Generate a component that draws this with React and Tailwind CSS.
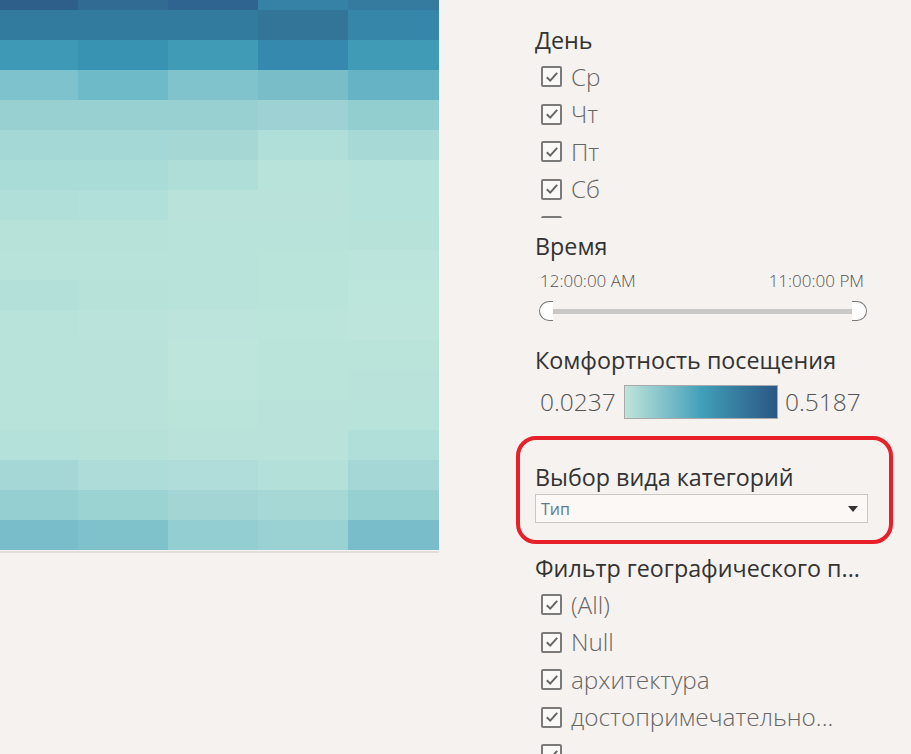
import React from 'react';

const heat = [
  ['#2e5f8a', '#316a93', '#2f6490', '#3681a6', '#357a9f'],
  ['#327b9e', '#337b9e', '#327b9e', '#337599', '#3586a8'],
  ['#3d99b5', '#3892b1', '#3f9bb6', '#3589ae', '#3f9bb6'],
  ['#7dc2cc', '#6fbac9', '#80c3cc', '#78bdc8', '#66b3c6'],
  ['#98d0d2', '#98d0d2', '#98d0d2', '#9dd1d3', '#92cdd0'],
  ['#a3d8d6', '#a3d8d6', '#a5d8d5', '#b0dfda', '#a7d9d6'],
  ['#a9dcd7', '#aadcd7', '#afddd8', '#b8e3da', '#b5e2da'],
  ['#b0ded9', '#b1dfda', '#b8e2da', '#b8e2da', '#b5e2da'],
  ['#b6e2da', '#b6e2da', '#b8e3da', '#b8e3da', '#b6e2da'],
  ['#b7e3da', '#b7e3da', '#b8e3da', '#b9e4da', '#bae4dc'],
  ['#b3e0d9', '#b7e2da', '#b8e3db', '#b9e4da', '#bce5dc'],
  ['#b8e3db', '#b9e3db', '#bde4dc', '#bbe4da', '#bde5dc'],
  ['#b8e3db', '#b9e3da', '#bde5dc', '#bae4da', '#bae4da'],
  ['#b8e3da', '#b9e3da', '#bde5dc', '#bae4da', '#b9e3da'],
  ['#b8e3da', '#b9e3da', '#bae4da', '#b9e3da', '#b8e3da'],
  ['#b4e1da', '#b5e1d9', '#b9e3da', '#b8e2da', '#b0ded8'],
  ['#a4d7d5', '#aedcd9', '#b0ddd9', '#b3e0d9', '#a4d7d5'],
  ['#96cfd1', '#9bd2d2', '#a2d5d4', '#a6d9d6', '#97d0d1'],
  ['#78bdc9', '#7fc2cb', '#93ced2', '#9ad1d2', '#78bdc9'],
];

function Check() {
  return (
    <span className="w-[21px] h-[21px] border-2 border-[#7a7a7a] rounded-[2px] bg-[#fbf9f7] flex items-center justify-center shrink-0">
      <svg width="14" height="12" viewBox="0 0 14 12">
        <path d="M1.8 6.2 L5.2 9.6 L12.2 1.8" fill="none" stroke="#666" strokeWidth="2" />
      </svg>
    </span>
  );
}

function Item({ label }) {
  return (
    <div className="h-[37.5px] flex items-center gap-[9px] pl-[6px]">
      <Check />
      {label && <span className="text-[24.3px] leading-[30px] font-light text-[#666] whitespace-nowrap">{label}</span>}
    </div>
  );
}

function Title({ children }) {
  return <div className="text-[23.3px] leading-[28px] text-[#333] whitespace-nowrap">{children}</div>;
}

export default function App() {
  return (
    <div className="w-[911px] h-[754px] overflow-hidden bg-[#f6f2ef] flex" style={{ fontFamily: '"Open Sans", "Noto Sans", sans-serif' }}>
      {/* heatmap */}
      <div className="w-[439px] shrink-0 self-start border-b-2 border-[#e2dedb]">
        <div className="grid grid-cols-[78px_90px_90px_90px_91px] grid-rows-[10px_repeat(18,30px)] h-[551px]">
          {heat.flatMap((row, r) =>
            row.map((c, i) => <div key={r + '-' + i} style={{ backgroundColor: c }} />)
          )}
        </div>
      </div>

      {/* filters */}
      <div className="ml-[96px] w-[350px] shrink-0 pt-[26px]">
        <Title>День</Title>
        <div className="h-[164px] overflow-hidden pt-[4px]">
          {['Ср', 'Чт', 'Пт', 'Сб'].map((d) => <Item key={d} label={d} />)}
          <Item />
        </div>

        <div className="mt-[14px]"><Title>Время</Title></div>
        <div className="flex justify-between pl-[5px] pr-[7px] mt-[11px] text-[17px] leading-[20px] text-[#555] font-light w-[336px]">
          <span>12:00:00 AM</span>
          <span>11:00:00 PM</span>
        </div>
        <div className="flex items-center pl-[4px] mt-[10px] h-[20px]">
          <div className="w-[14px] h-[20px] border-[1.5px] border-r-0 border-[#777] rounded-l-full bg-white" />
          <div className="w-[299px] h-[5px] bg-[#c8c8c8]" />
          <div className="w-[15px] h-[20px] border-[1.5px] border-l-0 border-[#777] rounded-r-full bg-white" />
        </div>

        <div className="mt-[25px]"><Title>Комфортность посещения</Title></div>
        <div className="flex items-center mt-[11px] h-[34px] pl-[5px]">
          <span className="text-[24.5px] font-light text-[#555] w-[84px]">0.0237</span>
          <div className="w-[154px] h-[34px] border border-[#a9a9a9] bg-gradient-to-r from-[#bfe4da] via-[#41a0ba] to-[#2b5784]" />
          <span className="text-[24.5px] font-light text-[#555] ml-[7px]">0.5187</span>
        </div>

        <div className="-ml-[19px] mt-[17px] w-[377px] h-[108px] border-[4px] border-[#e8202a] rounded-[20px] pl-[15px] pt-[23px]">
          <Title>Выбор вида категорий</Title>
          <div className="mt-[3px] w-[333px] h-[29px] border border-[#c9c6c3] bg-[#fbf8f6] flex items-center justify-between pl-[5px] pr-[9px]">
            <span className="text-[16px] text-[#5d7893]">Тип</span>
            <svg width="10" height="6" viewBox="0 0 10 6"><path d="M0 0 L10 0 L5 6 Z" fill="#333" /></svg>
          </div>
        </div>

        <div className="mt-[10px]"><Title>Фильтр географического п...</Title></div>
        <div className="pt-[4px]">
          {['(All)', 'Null', 'архитектура', 'достопримечательно...'].map((d) => <Item key={d} label={d} />)}
          <Item />
        </div>
      </div>
    </div>
  );
}
